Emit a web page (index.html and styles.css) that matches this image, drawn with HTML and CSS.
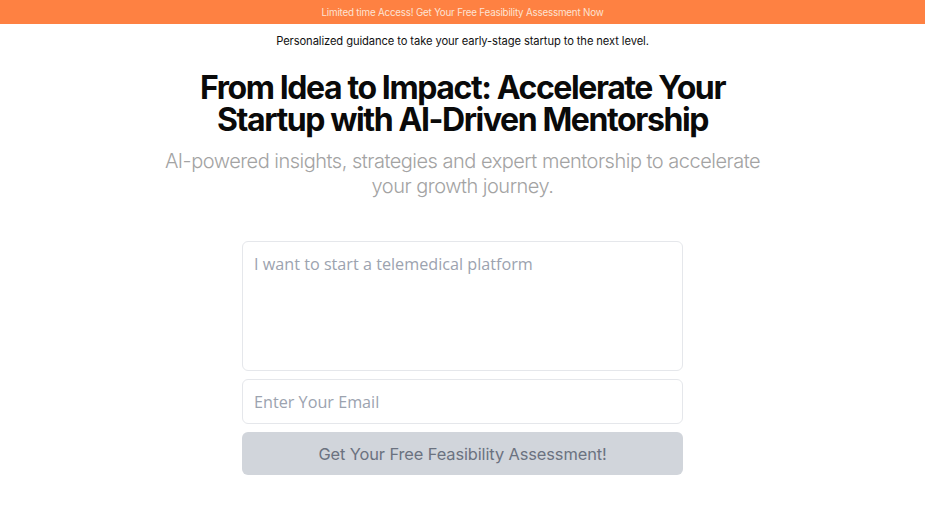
FILE: index.html
```html
<!DOCTYPE html>
<html lang="en">
<head>
<meta charset="utf-8">
<title>From Idea to Impact</title>
<link rel="stylesheet" href="styles.css">
</head>
<body>
<div class="banner">Limited time Access! Get Your Free Feasibility Assessment Now</div>
<main class="hero">
  <p class="tagline">Personalized guidance to take your early-stage startup to the next level.</p>
  <h1 class="title"><span class="line">From Idea to Impact: Accelerate Your</span> <span class="line">Startup with AI-Driven Mentorship</span></h1>
  <p class="subtitle">AI-powered insights, strategies and expert mentorship to accelerate your growth journey.</p>
  <form class="form">
    <textarea class="field idea" placeholder="I want to start a telemedical platform"></textarea>
    <input class="field email" type="email" placeholder="Enter Your Email">
    <button class="submit" type="button">Get Your Free Feasibility Assessment!</button>
  </form>
</main>
</body>
</html>
```
FILE: styles.css
```css
* { box-sizing: border-box; }
html, body { margin: 0; padding: 0; background: #ffffff; }
body { font-family: Inter, "Noto Sans", sans-serif; color: #111; }

.banner {
  height: 24px;
  background: #fe8142;
  color: #fde3d3;
  font-size: 9.8px;
  letter-spacing: -0.2px;
  display: flex;
  align-items: center;
  justify-content: center;
}

.hero {
  display: flex;
  flex-direction: column;
  align-items: center;
  text-align: center;
}

.tagline {
  margin: 10px 0 0;
  font-size: 11.2px;
  letter-spacing: -0.1px;
  line-height: 14px;
  color: #111;
}

.title {
  margin: 24px 0 0;
  font-size: 32px;
  line-height: 32px;
  font-weight: 700;
  letter-spacing: -1.4px;
  color: #0a0a0a;
}
.title .line { display: block; white-space: nowrap; }

.subtitle {
  margin: 13px 0 0;
  max-width: 610px;
  font-size: 20px;
  line-height: 25px;
  font-weight: 300;
  letter-spacing: -0.5px;
  color: #a3a3a3;
}

.form {
  margin-top: 42px;
  width: 441px;
  display: flex;
  flex-direction: column;
  gap: 8px;
}

.field {
  display: block;
  width: 100%;
  border: 1px solid #e5e7eb;
  border-radius: 6px;
  background: #fff;
  font-family: "Open Sans", sans-serif;
  font-size: 16.2px;
  color: #333;
  padding: 0 11px;
  outline: none;
}
.field::placeholder { color: #9ca3af; }

.idea {
  height: 130px;
  resize: none;
  padding-top: 10px;
  line-height: 24px;
}

.email {
  height: 45px;
}

.submit {
  height: 43px;
  border: none;
  border-radius: 6px;
  background: #d1d5db;
  color: #6b7280;
  font-family: Inter, "Noto Sans", sans-serif;
  font-size: 16.4px;
  letter-spacing: -0.1px;
}
```
